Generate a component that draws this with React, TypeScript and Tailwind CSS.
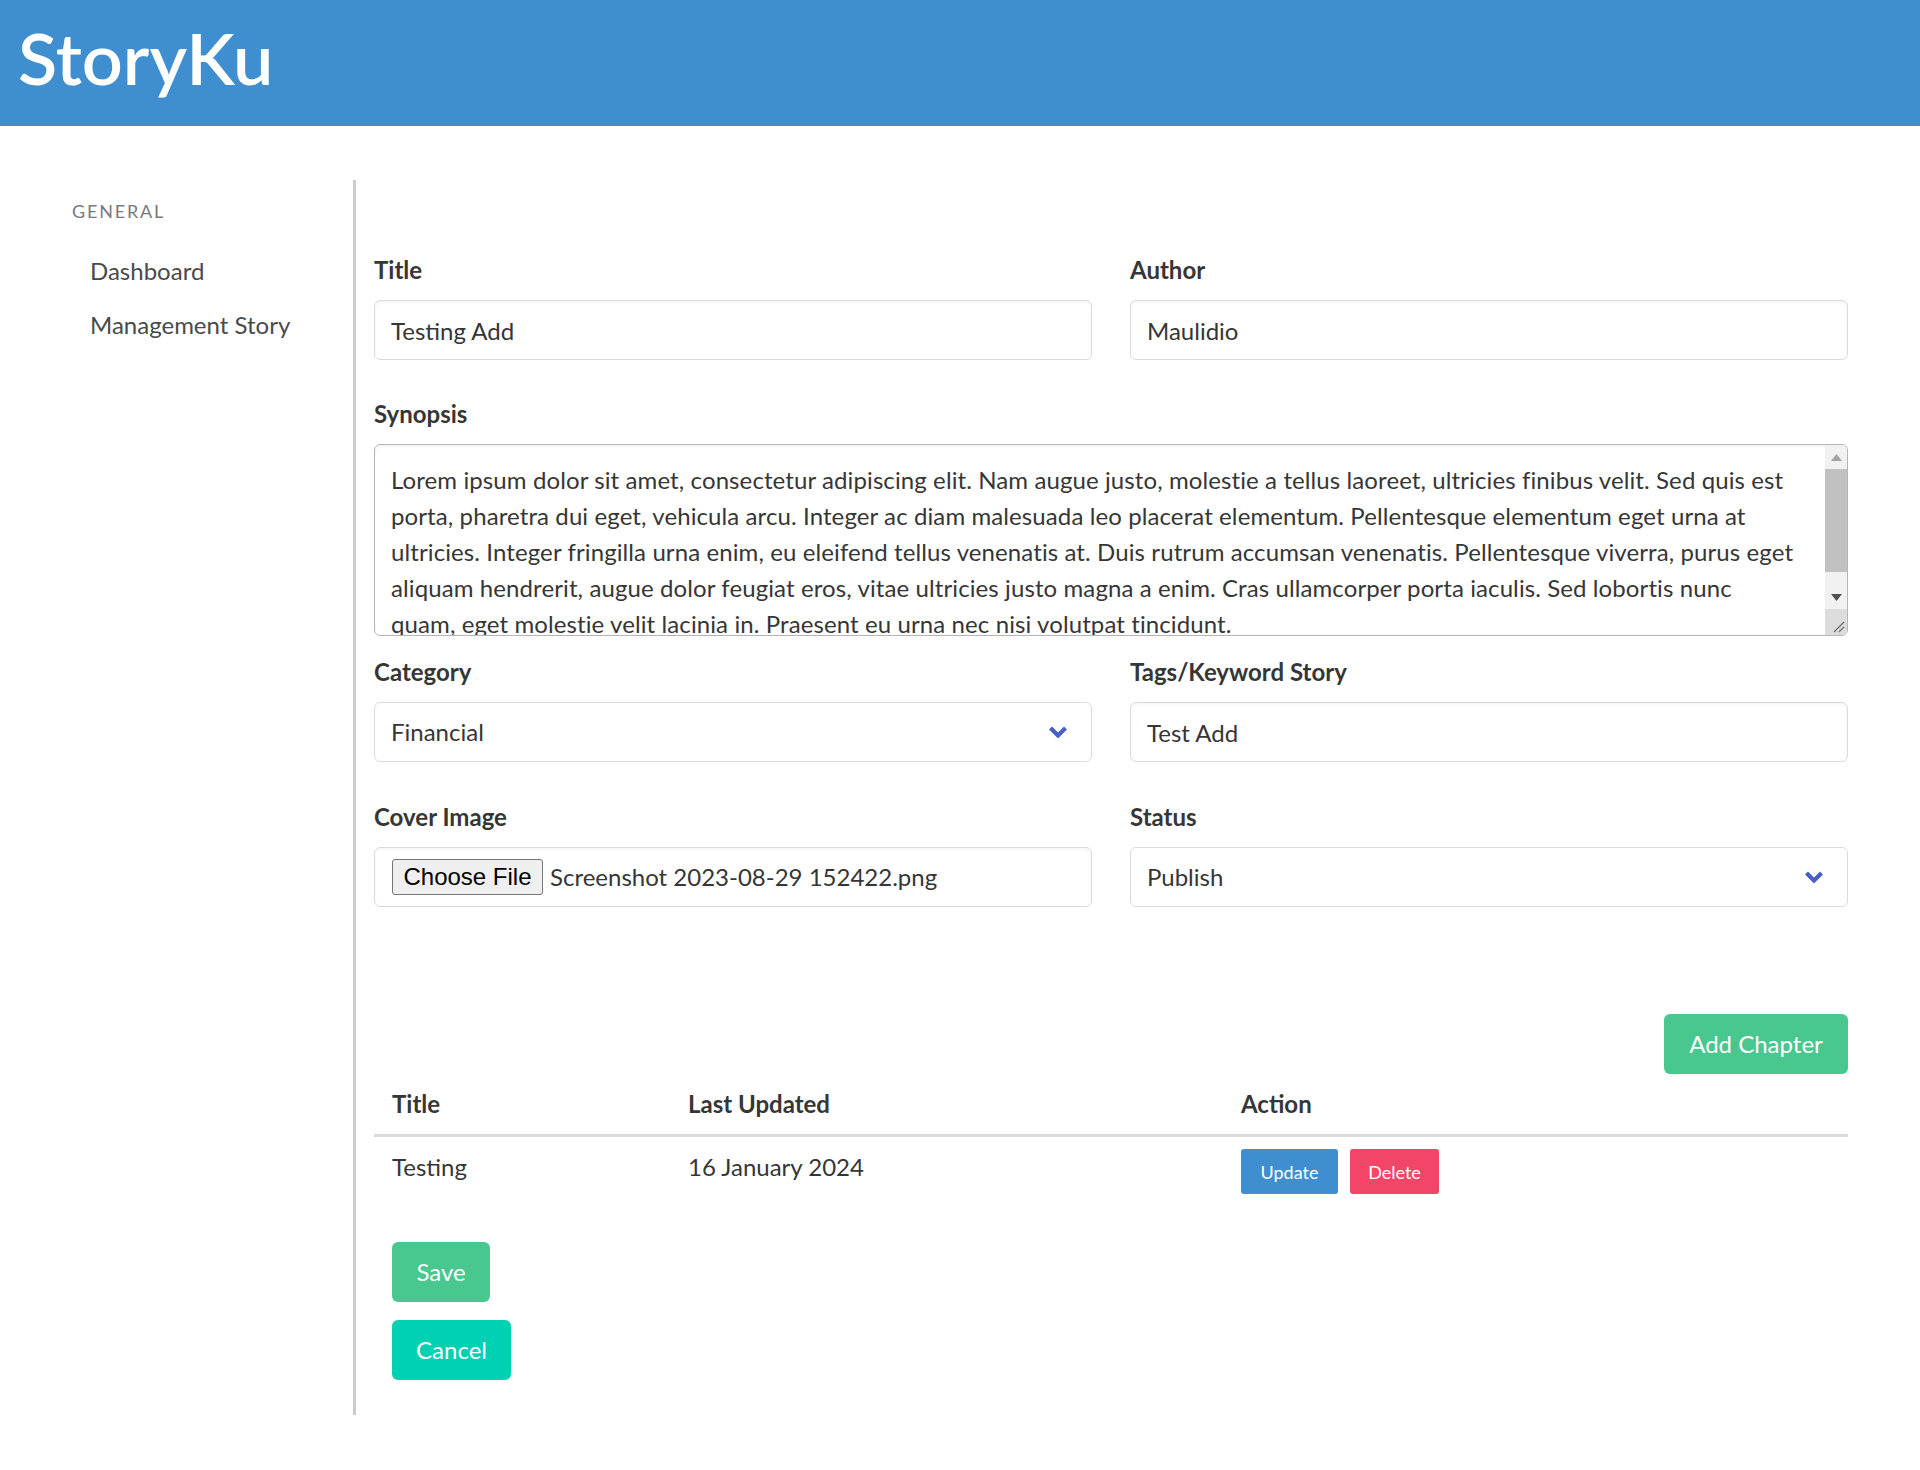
import React from "react";

const synopsis = [
  "Lorem ipsum dolor sit amet, consectetur adipiscing elit. Nam augue justo, molestie a tellus laoreet, ultricies finibus velit. Sed quis est",
  "porta, pharetra dui eget, vehicula arcu. Integer ac diam malesuada leo placerat elementum. Pellentesque elementum eget urna at",
  "ultricies. Integer fringilla urna enim, eu eleifend tellus venenatis at. Duis rutrum accumsan venenatis. Pellentesque viverra, purus eget",
  "aliquam hendrerit, augue dolor feugiat eros, vitae ultricies justo magna a enim. Cras ullamcorper porta iaculis. Sed lobortis nunc",
  "quam, eget molestie velit lacinia in. Praesent eu urna nec nisi volutpat tincidunt.",
];

function Label({ children }: { children: React.ReactNode }) {
  return (
    <label className="block mb-[12px] text-[24px] leading-[36px] font-bold text-[#363636]">
      {children}
    </label>
  );
}

function TextInput({ value }: { value: string }) {
  return (
    <input
      type="text"
      defaultValue={value}
      className="block h-[60px] w-full rounded-[6px] border border-[#dbdbdb] bg-white px-[16px] text-[24px] text-[#363636] shadow-[inset_0_1.5px_3px_rgba(10,10,10,0.05)] outline-none"
    />
  );
}

function Chevron() {
  return (
    <svg width="20" height="13" viewBox="0 0 20 13" className="pointer-events-none absolute right-[24px] top-1/2 -translate-y-1/2">
      <polyline points="2.5,2.5 10,10 17.5,2.5" fill="none" stroke="#485fc7" strokeWidth="4.2" strokeLinejoin="miter" />
    </svg>
  );
}

function SelectBox({ value }: { value: string }) {
  return (
    <div className="relative">
      <select
        defaultValue={value}
        className="block h-[60px] w-full appearance-none rounded-[6px] border border-[#dbdbdb] bg-white pl-[16px] pr-[60px] text-[24px] text-[#363636] outline-none"
      >
        <option>{value}</option>
      </select>
      <Chevron />
    </div>
  );
}

function Synopsis() {
  return (
    <div className="relative h-[192px] overflow-hidden rounded-[6px] border border-[#b5b5b5] bg-white shadow-[inset_0_1.5px_3px_rgba(10,10,10,0.05)]">
      <div className="whitespace-pre pl-[16px] pr-[40px] pt-[17px] text-[24px] leading-[36px] tracking-[0.1px] text-[#363636]">
        {synopsis.map((line) => (
          <div key={line}>{line}</div>
        ))}
      </div>
      {/* scrollbar */}
      <div className="absolute right-0 top-0 bottom-0 flex w-[22px] flex-col bg-[#f1f1f1]">
        <div className="flex h-[24px] items-center justify-center">
          <svg width="11" height="7" viewBox="0 0 11 7">
            <polygon points="5.5,0 11,7 0,7" fill="#a3a3a3" />
          </svg>
        </div>
        <div className="h-[103px] bg-[#c1c1c1]" />
        <div className="flex-1" />
        <div className="flex h-[24px] items-center justify-center">
          <svg width="11" height="7" viewBox="0 0 11 7">
            <polygon points="0,0 11,0 5.5,7" fill="#505050" />
          </svg>
        </div>
        <div className="flex h-[26px] items-end justify-end bg-[#dcdcdc] p-[2px]">
          <svg width="14" height="14" viewBox="0 0 14 14">
            <line x1="13" y1="3" x2="3" y2="13" stroke="#6b6b6b" strokeWidth="1.3" />
            <line x1="13" y1="8" x2="8" y2="13" stroke="#6b6b6b" strokeWidth="1.3" />
          </svg>
        </div>
      </div>
    </div>
  );
}

export default function App() {
  return (
    <div className="min-h-[1470px] bg-white font-['Lato',sans-serif] text-[#4a4a4a]">
      {/* Header */}
      <header className="h-[126px] bg-[#3e8ed0] px-[18px] pt-[21px]">
        <h1 className="text-[72px] leading-none font-semibold text-white">StoryKu</h1>
      </header>

      <div className="flex pt-[54px]">
        {/* Sidebar */}
        <aside className="w-[356px] shrink-0 border-r-[3px] border-[#cccccc] pl-[72px] pt-[20px]">
          <p className="mb-[21px] text-[18px] leading-[23px] tracking-[1.8px] uppercase text-[#7a7a7a]">General</p>
          <ul>
            <li>
              <a href="#" className="block px-[18px] py-[12px] text-[24px] leading-[30px] text-[#4a4a4a]">Dashboard</a>
            </li>
            <li>
              <a href="#" className="block px-[18px] py-[12px] text-[24px] leading-[30px] text-[#4a4a4a]">Management Story</a>
            </li>
          </ul>
        </aside>

        {/* Form */}
        <main className="flex-1 pl-[18px] pr-[72px] pt-[72px] pb-[35px]">
          <div className="grid grid-cols-2 gap-x-[38px]">
            <div>
              <Label>Title</Label>
              <TextInput value="Testing Add" />
            </div>
            <div>
              <Label>Author</Label>
              <TextInput value="Maulidio" />
            </div>
          </div>

          <div className="mt-[36px]">
            <Label>Synopsis</Label>
            <Synopsis />
          </div>

          <div className="mt-[18px] grid grid-cols-2 gap-x-[38px] gap-y-[37px]">
            <div>
              <Label>Category</Label>
              <SelectBox value="Financial" />
            </div>
            <div>
              <Label>Tags/Keyword Story</Label>
              <TextInput value="Test Add" />
            </div>
            <div>
              <Label>Cover Image</Label>
              <div className="flex h-[60px] items-center rounded-[6px] border border-[#dbdbdb] bg-white pl-[17px] shadow-[inset_0_1.5px_3px_rgba(10,10,10,0.05)]">
                <button className="h-[36px] w-[151px] rounded-[3px] border border-[#767676] bg-[#efefef] font-['Liberation_Sans',Arial,sans-serif] text-[24px] leading-none text-black">
                  Choose File
                </button>
                <span className="ml-[7px] text-[24px] text-[#363636]">Screenshot 2023-08-29 152422.png</span>
              </div>
            </div>
            <div>
              <Label>Status</Label>
              <SelectBox value="Publish" />
            </div>
          </div>

          <div className="mt-[107px] flex justify-end">
            <button className="h-[60px] w-[184px] rounded-[6px] bg-[#48c78e] text-[24px] text-white">Add Chapter</button>
          </div>

          <table className="w-full border-collapse text-[24px] leading-[36px] text-[#363636]">
            <thead>
              <tr className="border-b-[3px] border-[#dbdbdb]">
                <th className="w-[296px] px-[18px] py-[12px] text-left font-bold">Title</th>
                <th className="w-[553px] px-[18px] py-[12px] text-left font-bold">Last Updated</th>
                <th className="px-[18px] py-[12px] text-left font-bold">Action</th>
              </tr>
            </thead>
            <tbody>
              <tr>
                <td className="px-[18px] py-[12px] align-top">Testing</td>
                <td className="px-[18px] py-[12px] align-top">16 January 2024</td>
                <td className="px-[18px] py-[12px] align-top">
                  <div className="flex gap-[12px]">
                    <button className="h-[45px] w-[97px] rounded-[3px] bg-[#3e8ed0] text-[18px] leading-none text-white">Update</button>
                    <button className="h-[45px] w-[89px] rounded-[3px] bg-[#f14668] text-[18px] leading-none text-white">Delete</button>
                  </div>
                </td>
              </tr>
            </tbody>
          </table>

          <div className="mt-[36px] flex flex-col items-start gap-[18px] pl-[18px]">
            <button className="h-[60px] w-[98px] rounded-[6px] bg-[#48c78e] text-[24px] text-white">Save</button>
            <button className="h-[60px] w-[119px] rounded-[6px] bg-[#00d1b2] text-[24px] text-white">Cancel</button>
          </div>
        </main>
      </div>
    </div>
  );
}
